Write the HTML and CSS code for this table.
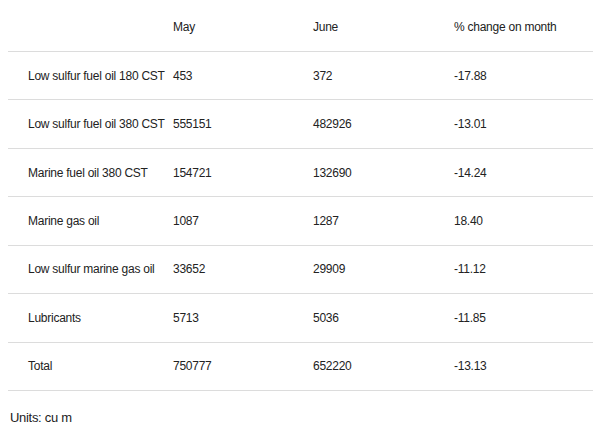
FILE: index.html
```html
<!DOCTYPE html>
<html>
<head>
<meta charset="utf-8">
<link rel="stylesheet" href="styles.css">
</head>
<body>
<div class="page">
  <div class="table">
    <div class="row head">
      <div class="cell first"></div>
      <div class="cell">May</div>
      <div class="cell">June</div>
      <div class="cell">% change on month</div>
    </div>
    <div class="row">
      <div class="cell first">Low sulfur fuel oil 180 CST</div>
      <div class="cell">453</div>
      <div class="cell">372</div>
      <div class="cell">-17.88</div>
    </div>
    <div class="row">
      <div class="cell first">Low sulfur fuel oil 380 CST</div>
      <div class="cell">555151</div>
      <div class="cell">482926</div>
      <div class="cell">-13.01</div>
    </div>
    <div class="row">
      <div class="cell first">Marine fuel oil 380 CST</div>
      <div class="cell">154721</div>
      <div class="cell">132690</div>
      <div class="cell">-14.24</div>
    </div>
    <div class="row">
      <div class="cell first">Marine gas oil</div>
      <div class="cell">1087</div>
      <div class="cell">1287</div>
      <div class="cell">18.40</div>
    </div>
    <div class="row">
      <div class="cell first">Low sulfur marine gas oil</div>
      <div class="cell">33652</div>
      <div class="cell">29909</div>
      <div class="cell">-11.12</div>
    </div>
    <div class="row">
      <div class="cell first">Lubricants</div>
      <div class="cell">5713</div>
      <div class="cell">5036</div>
      <div class="cell">-11.85</div>
    </div>
    <div class="row">
      <div class="cell first">Total</div>
      <div class="cell">750777</div>
      <div class="cell">652220</div>
      <div class="cell">-13.13</div>
    </div>
  </div>
  <div class="units">Units: cu m</div>
</div>
</body>
</html>
```

FILE: styles.css
```css
html, body {
  margin: 0;
  padding: 0;
  background: #ffffff;
}
body {
  width: 600px;
  height: 430px;
  overflow: hidden;
  font-family: "Liberation Sans", Arial, sans-serif;
  color: #222222;
}
.page {
  padding: 0 7px 0 8px;
}
.table {
  display: flex;
  flex-direction: column;
}
.row {
  display: grid;
  grid-template-columns: 157px 140px 141px 147px;
  height: 48.43px;
  box-sizing: border-box;
  border-bottom: 1px solid #dcdcdc;
  align-items: center;
  font-size: 12px;
  letter-spacing: -0.25px;
}
.row.head {
  height: 52px;
  align-items: start;
  padding-top: 19px;
}
.cell {
  padding-left: 8px;
  line-height: 16px;
  white-space: nowrap;
}
.cell.first {
  padding-left: 20px;
}
.units {
  margin-top: 19px;
  padding-left: 2px;
  font-size: 13px;
  letter-spacing: -0.3px;
  color: #222222;
}
```
